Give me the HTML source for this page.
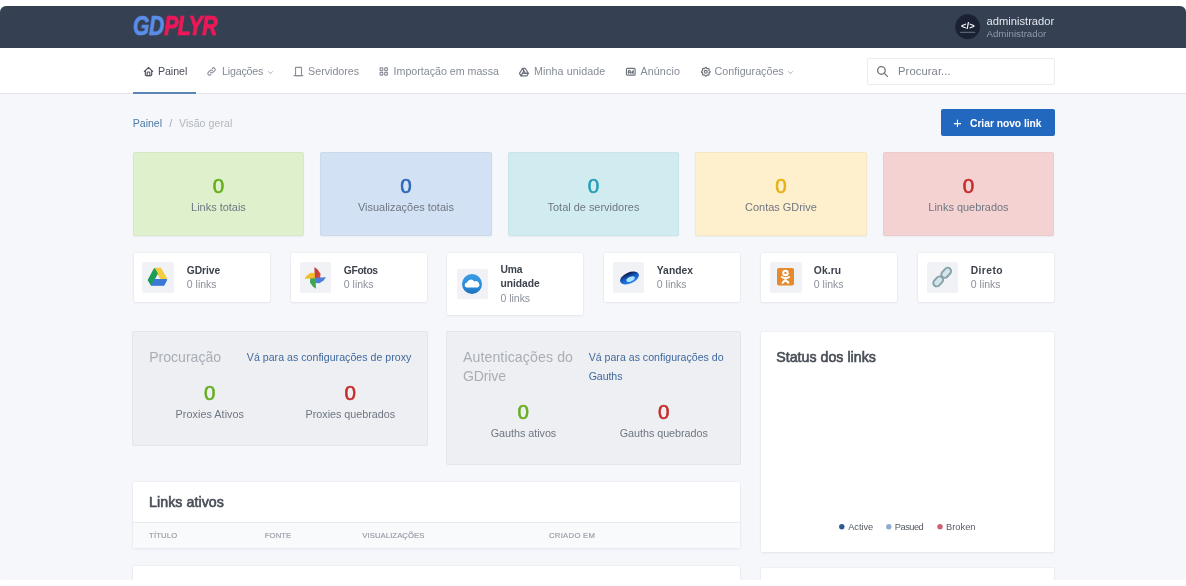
<!DOCTYPE html>
<html lang="pt"><head><meta charset="utf-8"><title>GDPlyr - Painel</title>
<style>
html,body{margin:0;padding:0;background:#fff;}
body{width:1186px;height:586px;overflow:hidden;position:relative;font-family:"Liberation Sans",Arial,sans-serif;}
#page{position:absolute;left:0;top:0;width:1186px;height:586px;background:#f5f7fb;clip-path:inset(6px 0 6px 0 round 6px 6px 3px 3px);}
#page div,#page svg{position:absolute;box-sizing:border-box;}
#txt{left:0;top:0;width:1186px;height:586px;will-change:transform;}
#txt span{position:absolute;white-space:pre;line-height:1;}
#txt span.num{-webkit-text-stroke:.55px currentColor;}
#txt span.med{-webkit-text-stroke:.6px currentColor;}
#txt span.th{-webkit-text-stroke:.2px currentColor;}
.hdr{left:0;top:6px;width:1186px;height:42px;background:#354052;}
.nav{left:0;top:48px;width:1186px;height:45.5px;background:#fff;border-bottom:1px solid #e3e6ea;}
.act{left:133px;top:91.5px;width:63.4px;height:2px;background:#5a86b4;}
.srch{left:867px;top:57.5px;width:188px;height:27px;background:#fff;border:1px solid #e9ecf0;border-radius:2px;}
.btn{left:941px;top:108.6px;width:113.7px;height:27.8px;background:#2368bf;border-radius:2px;}
.stat{top:152px;width:171.5px;height:84px;border-radius:2px;border:1px solid rgba(90,100,115,.055);box-shadow:0 1px 2px rgba(50,60,80,.06);}
.card{background:#fff;border-radius:2px;box-shadow:0 0 0 1px rgba(110,117,130,.035),0 1px 3px rgba(50,60,80,.07);}
.svc{top:253px;width:136px;height:49px;}
.ib{width:31.6px;height:30.7px;background:#f0f2f6;border-radius:2px;}
.pan{background:#edeff2;border:1px solid #e2e5e9;border-radius:2px;}
.logo{left:133.4px;top:11.7px;font-size:27.9px;font-weight:700;font-style:italic;line-height:1;white-space:pre;transform-origin:0 0;transform:scaleX(.755);letter-spacing:-.6px;-webkit-text-stroke:.7px currentColor;}

</style></head>
<body>
<div id="page">
<div class="hdr"></div>
<div class="logo"><span style="color:#5a8de6">GD</span><span style="color:#ee1558">PLYR</span></div>
<svg style="left:955px;top:14.3px" width="25.4" height="25.4" viewBox="0 0 50 50"><circle cx="25" cy="25" r="24.5" fill="#1a2133"/><rect x="10" y="35" width="30" height="2.200" rx="1" fill="#8f97a8" opacity=".55"/></svg>
<div class="nav"></div>
<div class="act"></div>
<div class="srch"></div>
<div class="btn"></div>
<!-- nav icons -->
<svg class="ni" style="left:142.6px;top:66px" width="11" height="11" viewBox="0 0 24 24" fill="none" stroke="#50555e" stroke-width="2.5" stroke-linecap="round" stroke-linejoin="round"><path d="M5 12H3l9-9l9 9h-2"/><path d="M5 12v7a2 2 0 0 0 2 2h10a2 2 0 0 0 2-2v-7"/><path d="M9 21v-6a2 2 0 0 1 2-2h2a2 2 0 0 1 2 2v6"/></svg>
<svg style="left:206.4px;top:66px" width="11" height="11" viewBox="0 0 24 24" fill="none" stroke="#8a9099" stroke-width="2.5" stroke-linecap="round" stroke-linejoin="round"><path d="M10 14a3.5 3.5 0 0 0 5 0l4-4a3.5 3.5 0 0 0-5-5l-.5.5"/><path d="M14 10a3.5 3.5 0 0 0-5 0l-4 4a3.5 3.5 0 0 0 5 5l.5-.5"/></svg>
<svg style="left:266.6px;top:69.2px" width="7" height="7" viewBox="0 0 24 24" fill="none" stroke="#9aa0a9" stroke-width="3" stroke-linecap="round" stroke-linejoin="round"><path d="M5 9l7 7l7-7"/></svg>
<svg style="left:292.8px;top:66px" width="11" height="11" viewBox="0 0 24 24" fill="none" stroke="#8a9099" stroke-width="2.5" stroke-linecap="round" stroke-linejoin="round"><rect x="5.500" y="3" width="13" height="18" rx="1"/><path d="M2.500 21h19"/></svg>
<svg style="left:378px;top:66px" width="11.5" height="11" viewBox="0 0 24 24" fill="none" stroke="#8a9099" stroke-width="2.5" stroke-linecap="round" stroke-linejoin="round"><rect x="4" y="4" width="6" height="6" rx="1.5"/><rect x="14" y="4" width="6" height="6" rx="1.5"/><rect x="4" y="14" width="6" height="6" rx="1.5"/><rect x="14" y="14" width="6" height="6" rx="1.5"/></svg>
<svg style="left:518.4px;top:65.6px" width="11.8" height="11.8" viewBox="0 0 24 24" fill="none" stroke="#6c717a" stroke-width="2.4" stroke-linecap="round" stroke-linejoin="round"><path d="M12 10l-6 10l-3-5l6-10z"/><path d="M9 15h12l-3 5h-12"/><path d="M15 15l-6-10h6l6 10z"/></svg>
<svg style="left:625px;top:65.6px" width="11.6" height="11.6" viewBox="0 0 24 24" fill="none" stroke="#6c717a" stroke-width="2.4" stroke-linecap="round" stroke-linejoin="round"><rect x="3" y="5" width="18" height="14" rx="2"/><path d="M7 15v-4a2 2 0 0 1 4 0v4"/><path d="M7 13h4"/><path d="M17 9v6h-1.500a1.500 1.500 0 1 1 1.500-1.500"/></svg>
<svg style="left:699.6px;top:65.6px" width="11.6" height="11.6" viewBox="0 0 24 24" fill="none" stroke="#6c717a" stroke-width="2.4" stroke-linecap="round" stroke-linejoin="round"><path d="M10.325 4.317c.426-1.756 2.924-1.756 3.350 0a1.724 1.724 0 0 0 2.573 1.066c1.543-.940 3.310.826 2.370 2.370a1.724 1.724 0 0 0 1.065 2.572c1.756.426 1.756 2.924 0 3.350a1.724 1.724 0 0 0-1.066 2.573c.940 1.543-.826 3.310-2.370 2.370a1.724 1.724 0 0 0-2.572 1.065c-.426 1.756-2.924 1.756-3.350 0a1.724 1.724 0 0 0-2.573-1.066c-1.543.940-3.310-.826-2.370-2.370a1.724 1.724 0 0 0-1.065-2.572c-1.756-.426-1.756-2.924 0-3.350a1.724 1.724 0 0 0 1.066-2.573c-.940-1.543.826-3.310 2.370-2.370c1 .608 2.296.070 2.572-1.065z"/><circle cx="12" cy="12" r="3"/></svg>
<svg style="left:787.4px;top:69.2px" width="7" height="7" viewBox="0 0 24 24" fill="none" stroke="#9aa0a9" stroke-width="3" stroke-linecap="round" stroke-linejoin="round"><path d="M5 9l7 7l7-7"/></svg>
<svg style="left:875.6px;top:65px" width="13" height="13" viewBox="0 0 24 24" fill="none" stroke="#70757e" stroke-width="2.5" stroke-linecap="round" stroke-linejoin="round"><circle cx="10" cy="10" r="7"/><path d="M21 21l-6-6"/></svg>
<!-- stat cards -->
<div class="stat" style="left:132.8px;background:#dff1cc"></div>
<div class="stat" style="left:320.3px;background:#d2e1f3"></div>
<div class="stat" style="left:507.8px;background:#d1ecf1"></div>
<div class="stat" style="left:695.3px;background:#feefcd"></div>
<div class="stat" style="left:882.8px;background:#f5d2d2"></div>
<!-- service cards -->
<div class="card svc" style="left:134px"></div>
<div class="card svc" style="left:291px"></div>
<div class="card svc" style="left:447px;height:62px"></div>
<div class="card svc" style="left:604px"></div>
<div class="card svc" style="left:761px"></div>
<div class="card svc" style="left:918px"></div>
<div class="ib" style="left:142.3px;top:261.9px"></div>
<div class="ib" style="left:299.9px;top:261.9px"></div>
<div class="ib" style="left:456.6px;top:268.8px"></div>
<div class="ib" style="left:612.5px;top:261.9px"></div>
<div class="ib" style="left:770px;top:261.9px"></div>
<div class="ib" style="left:926.8px;top:261.9px"></div>
<!-- gdrive -->
<svg style="left:147.4px;top:266.8px" width="21.4" height="19.600" viewBox="-2 -2 46 42" stroke-width="3" stroke-linejoin="round"><path d="M15 1h12l13 22h-12z" fill="#f2cd42" stroke="#f2cd42"/><path d="M14 2l6 10l-13 24l-6-10z" fill="#1f9d57" stroke="#1f9d57"/><path d="M15 25h25l-6 12h-26z" fill="#3b78d8" stroke="#3b78d8"/></svg>
<!-- gphotos pinwheel -->
<svg style="left:303px;top:265.7px" width="23.6" height="23.6" viewBox="-11.300 -11.300 22.600 22.600"><g transform="translate(.4 .2)"><path id="bl" d="M-.3 0L-.7-10.300L2.200-8.200L5-4.200L4.800 0Z" fill="#d6473b"/><path d="M-.3 0L-.7-10.300L2.200-8.200L5-4.200L4.800 0Z" fill="#4c80d8" transform="rotate(90)"/><path d="M-.3 0L-.7-10.300L2.200-8.200L5-4.200L4.800 0Z" fill="#3ea552" transform="rotate(180)"/><path d="M-.3 0L-.7-10.300L2.200-8.200L5-4.200L4.800 0Z" fill="#f2ba30" transform="rotate(270)"/><path d="M-.3 0L-.7-10.300L2.200-8.200L2 0Z" fill="#b23a3a" opacity=".55"/></g></svg>
<!-- onedrive -->
<svg style="left:461.6px;top:273.5px" width="20" height="20" viewBox="0 0 40 40"><defs><linearGradient id="od" x1="0" y1="0" x2="0" y2="1"><stop offset="0" stop-color="#3a9be6"/><stop offset=".65" stop-color="#2b8ad8"/><stop offset="1" stop-color="#1c6fb8"/></linearGradient></defs><circle cx="20" cy="20" r="20" fill="url(#od)"/><path d="M9 27a5 5 0 0 1 1-9.8a8 8 0 0 1 14.5-2.2a6.2 6.2 0 0 1 6.5 12z" fill="#fff"/></svg>
<!-- yandex disk -->
<svg style="left:617.5px;top:268.5px" width="23" height="18" viewBox="0 0 46 36"><defs><linearGradient id="yd" x1="0" y1="0" x2="0" y2="1"><stop offset="0" stop-color="#081848"/><stop offset=".45" stop-color="#1558c0"/><stop offset="1" stop-color="#2a86ee"/></linearGradient></defs><g transform="rotate(-24 23 18)"><ellipse cx="23" cy="18" rx="20" ry="11" fill="url(#yd)"/><ellipse cx="24" cy="21" rx="9" ry="4.6" fill="#a9e2ff"/></g></svg>
<!-- ok.ru -->
<svg style="left:777px;top:268.2px" width="17" height="17.500" viewBox="0 0 33 34"><rect width="33" height="34" rx="3.500" fill="#e58a2f"/><g fill="none" stroke="#fff" stroke-width="4" stroke-linecap="round"><circle cx="16.500" cy="9.500" r="4.300"/><path d="M9.500 17.500c4.500 3 9.500 3 14 0M16.500 20v3M16.500 23l-5.500 5.500M16.500 23l5.500 5.500"/></g></svg>
<!-- direct link chain -->
<svg style="left:931px;top:266px" width="23" height="23" viewBox="0 0 23 23" fill="#d3e5e8" stroke="#86a2a8" stroke-width="1.9"><rect x="-5.600" y="-3.400" width="11.200" height="6.800" rx="3.400" transform="translate(15.200 6.800) rotate(-47)"/><rect x="-5.600" y="-3.400" width="11.200" height="6.800" rx="3.400" transform="translate(7.200 15.400) rotate(-47)"/></svg>
<!-- panels -->
<div class="pan" style="left:132.3px;top:331px;width:295.3px;height:115px"></div>
<div class="pan" style="left:446.1px;top:331px;width:294.7px;height:134.2px"></div>
<!-- status card -->
<div class="card" style="left:760.6px;top:331.5px;width:293.4px;height:220.8px"></div>
<svg style="left:838px;top:523px" width="110" height="8" viewBox="0 0 110 8"><circle cx="3.800" cy="3.800" r="2.700" fill="#2c5896"/><circle cx="50.800" cy="3.800" r="2.700" fill="#8eabd2"/><circle cx="102" cy="3.800" r="2.700" fill="#cf6070"/></svg>
<!-- links ativos -->
<div class="card" style="left:133.2px;top:481.7px;width:606.500px;height:66.300px"></div>
<div style="left:133.2px;top:522.4px;width:606.500px;height:25.600px;background:#f9fafc;border-top:1px solid #e9ebef"></div>
<!-- next row -->
<div class="card" style="left:133.2px;top:565.5px;width:606.500px;height:60px"></div>
<div class="card" style="left:760.6px;top:568px;width:293.400px;height:60px"></div>

<div id="txt">
<span style="left:961.10px;top:20.70px;font-size:9.40px;font-weight:700;color:#ffffff;">&lt;/&gt;</span>
<span style="left:986.50px;top:15.80px;font-size:11.20px;letter-spacing:-0.004px;color:#e3e7ee;">administrador</span>
<span style="left:986.50px;top:29.20px;font-size:9.70px;color:#8f9aac;">Administrador</span>
<span style="left:157.90px;top:66.00px;font-size:10.70px;letter-spacing:-0.069px;color:#4a4f58;">Painel</span>
<span style="left:222.10px;top:66.00px;font-size:10.70px;letter-spacing:-0.219px;color:#858b95;">Ligações</span>
<span style="left:308.10px;top:66.00px;font-size:10.70px;letter-spacing:-0.005px;color:#858b95;">Servidores</span>
<span style="left:393.60px;top:66.00px;font-size:10.70px;letter-spacing:-0.020px;color:#858b95;">Importação em massa</span>
<span style="left:534.00px;top:66.00px;font-size:10.70px;letter-spacing:0.100px;color:#858b95;">Minha unidade</span>
<span style="left:640.40px;top:66.00px;font-size:10.70px;letter-spacing:0.155px;color:#858b95;">Anúncio</span>
<span style="left:714.60px;top:66.00px;font-size:10.70px;letter-spacing:0.017px;color:#858b95;">Configurações</span>
<span style="left:898.00px;top:65.80px;font-size:11.20px;letter-spacing:0.104px;color:#7d838c;">Procurar...</span>
<span style="left:132.80px;top:117.70px;font-size:10.60px;letter-spacing:-0.033px;color:#4d7aa8;">Painel</span>
<span style="left:169.13px;top:117.70px;font-size:10.60px;color:#a3a9b3;">/</span>
<span style="left:179.00px;top:117.70px;font-size:10.60px;letter-spacing:0.046px;color:#b1b6be;">Visão geral</span>
<span style="left:953.37px;top:115.60px;font-size:14.50px;color:#ffffff;">+</span>
<span style="left:970.00px;top:118.90px;font-size:10.30px;font-weight:700;letter-spacing:-0.037px;color:#ffffff;">Criar novo link</span>
<span class="num" style="left:212.77px;top:175.90px;font-size:20.60px;color:#64ae1c;">0</span>
<span style="left:191.11px;top:201.90px;font-size:10.95px;color:#6f7783;">Links totais</span>
<span class="num" style="left:400.27px;top:175.90px;font-size:20.60px;color:#2b66b6;">0</span>
<span style="left:358.02px;top:201.90px;font-size:10.95px;color:#6f7783;">Visualizações totais</span>
<span class="num" style="left:587.77px;top:175.90px;font-size:20.60px;color:#229fb4;">0</span>
<span style="left:547.55px;top:201.90px;font-size:10.95px;color:#6f7783;">Total de servidores</span>
<span class="num" style="left:775.27px;top:175.90px;font-size:20.60px;color:#e6b012;">0</span>
<span style="left:745.10px;top:201.90px;font-size:10.95px;color:#6f7783;">Contas GDrive</span>
<span class="num" style="left:962.77px;top:175.90px;font-size:20.60px;color:#c72a2a;">0</span>
<span style="left:928.32px;top:201.90px;font-size:10.95px;color:#6f7783;">Links quebrados</span>
<span style="left:186.80px;top:266.40px;font-size:10.30px;font-weight:700;letter-spacing:-0.076px;color:#3c424c;">GDrive</span>
<span style="left:186.80px;top:279.30px;font-size:10.50px;letter-spacing:0.006px;color:#8b919b;">0 links</span>
<span style="left:343.80px;top:266.40px;font-size:10.30px;font-weight:700;letter-spacing:-0.349px;color:#3c424c;">GFotos</span>
<span style="left:343.80px;top:279.30px;font-size:10.50px;letter-spacing:0.006px;color:#8b919b;">0 links</span>
<span style="left:500.50px;top:265.30px;font-size:10.30px;font-weight:700;letter-spacing:-0.113px;color:#3c424c;">Uma</span>
<span style="left:500.50px;top:279.00px;font-size:10.30px;font-weight:700;letter-spacing:-0.048px;color:#3c424c;">unidade</span>
<span style="left:500.50px;top:293.00px;font-size:10.50px;letter-spacing:-0.027px;color:#8b919b;">0 links</span>
<span style="left:656.80px;top:266.40px;font-size:10.30px;font-weight:700;letter-spacing:0.026px;color:#3c424c;">Yandex</span>
<span style="left:656.80px;top:279.30px;font-size:10.50px;letter-spacing:0.006px;color:#8b919b;">0 links</span>
<span style="left:813.80px;top:266.40px;font-size:10.30px;font-weight:700;letter-spacing:0.099px;color:#3c424c;">Ok.ru</span>
<span style="left:813.80px;top:279.30px;font-size:10.50px;letter-spacing:0.006px;color:#8b919b;">0 links</span>
<span style="left:970.80px;top:266.40px;font-size:10.30px;font-weight:700;letter-spacing:0.388px;color:#3c424c;">Direto</span>
<span style="left:970.80px;top:279.30px;font-size:10.50px;letter-spacing:0.006px;color:#8b919b;">0 links</span>
<span style="left:149.20px;top:350.30px;font-size:14.10px;letter-spacing:-0.023px;color:#a9aeb6;">Procuração</span>
<span style="left:246.80px;top:351.70px;font-size:10.60px;letter-spacing:0.025px;color:#40699f;">Vá para as configurações de proxy</span>
<span class="num" style="left:204.07px;top:383.20px;font-size:20.60px;color:#64ae1c;">0</span>
<span class="num" style="left:344.57px;top:383.20px;font-size:20.60px;color:#c72a2a;">0</span>
<span style="left:175.60px;top:409.00px;font-size:10.80px;letter-spacing:0.044px;color:#6f7783;">Proxies Ativos</span>
<span style="left:305.60px;top:409.00px;font-size:10.80px;letter-spacing:-0.028px;color:#6f7783;">Proxies quebrados</span>
<span style="left:462.90px;top:350.30px;font-size:14.10px;letter-spacing:0.128px;color:#a9aeb6;">Autenticações do</span>
<span style="left:462.90px;top:369.20px;font-size:14.10px;letter-spacing:-0.154px;color:#a9aeb6;">GDrive</span>
<span style="left:588.70px;top:351.70px;font-size:10.60px;color:#40699f;">Vá para as configurações do</span>
<span style="left:588.70px;top:370.60px;font-size:10.60px;letter-spacing:-0.075px;color:#40699f;">Gauths</span>
<span class="num" style="left:517.47px;top:402.20px;font-size:20.60px;color:#64ae1c;">0</span>
<span class="num" style="left:658.07px;top:402.20px;font-size:20.60px;color:#c72a2a;">0</span>
<span style="left:490.70px;top:428.00px;font-size:10.80px;letter-spacing:-0.036px;color:#6f7783;">Gauths ativos</span>
<span style="left:619.70px;top:428.00px;font-size:10.80px;letter-spacing:-0.044px;color:#6f7783;">Gauths quebrados</span>
<span class="med" style="left:776.20px;top:350.00px;font-size:14.20px;letter-spacing:0.023px;color:#484d56;">Status dos links</span>
<span style="left:848.20px;top:523.20px;font-size:9.30px;letter-spacing:-0.065px;color:#555b64;">Active</span>
<span style="left:894.80px;top:523.20px;font-size:9.30px;letter-spacing:-0.509px;color:#555b64;">Pasued</span>
<span style="left:946.00px;top:523.20px;font-size:9.30px;letter-spacing:0.006px;color:#555b64;">Broken</span>
<span class="med" style="left:149.10px;top:495.10px;font-size:14.20px;letter-spacing:0.055px;color:#484d56;">Links ativos</span>
<span class="th" style="left:149.10px;top:532.20px;font-size:7.70px;letter-spacing:0.144px;color:#9a9fa8;">TÍTULO</span>
<span class="th" style="left:264.80px;top:532.20px;font-size:7.70px;letter-spacing:0.077px;color:#9a9fa8;">FONTE</span>
<span class="th" style="left:362.30px;top:532.20px;font-size:7.70px;letter-spacing:0.084px;color:#9a9fa8;">VISUALIZAÇÕES</span>
<span class="th" style="left:549.00px;top:532.20px;font-size:7.70px;letter-spacing:0.295px;color:#9a9fa8;">CRIADO EM</span>
</div>
</div>
</body></html>
